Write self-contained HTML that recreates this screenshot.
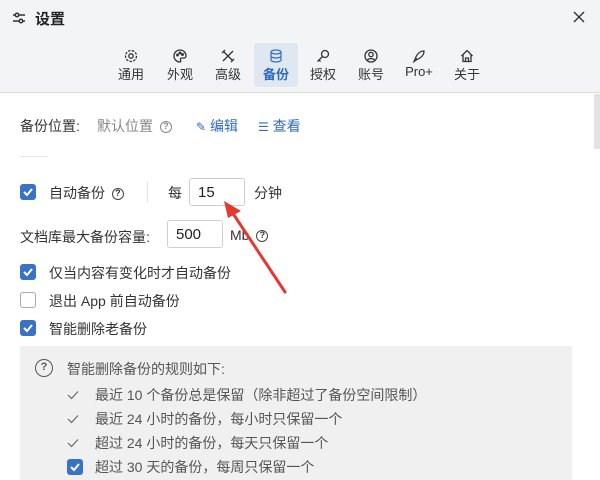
<!DOCTYPE html>
<html><head><meta charset="utf-8"><style>
*{margin:0;padding:0;box-sizing:border-box}
body{width:600px;height:480px;overflow:hidden;background:#fff;font-family:"Liberation Sans","Noto Sans CJK SC",sans-serif;color:#333;font-size:14px;position:relative}
.hdr{position:absolute;left:0;top:0;width:600px;height:93px;background:#f3f4f6;border-bottom:1px solid #dcdcdc}
.abs{position:absolute;white-space:nowrap}
.tab{position:absolute;top:43px;width:44px;height:44px;text-align:center;font-size:13px;color:#333}
.tab svg{display:block;margin:6px auto 0}
.tab span{display:block;margin-top:1px}
.cb{position:absolute;width:16px;height:16px;border-radius:3px;background:#3a73c4}
.cb svg{position:absolute;left:2px;top:2px}
.cbe{position:absolute;width:16px;height:16px;border-radius:3px;border:1px solid #aaa;background:#fff}
.inp{position:absolute;border:1px solid #cfcfcf;border-radius:3px;background:#fff;padding-left:8px;font-size:15px;color:#222}
.q{display:inline-block;width:12px;height:12px;border:1.4px solid #444;border-radius:50%;font-size:9px;line-height:9px;text-align:center;font-weight:bold;vertical-align:middle}
.g{color:#555}
.ck{position:absolute}
</style></head><body>
<div class="hdr"></div>
<svg class="abs" style="left:12px;top:12px" width="14" height="12" viewBox="0 0 14 12" fill="none" stroke="#333" stroke-width="1.5"><path d="M1 3h12M1 9h12"/><circle cx="5" cy="3" r="1.8" fill="#f3f4f6"/><circle cx="9" cy="9" r="1.8" fill="#f3f4f6"/></svg>
<div class="abs" style="left:35px;top:8px;font-size:15px;font-weight:bold;color:#222">设置</div>
<svg class="abs" style="left:573px;top:11px" width="12" height="12" viewBox="0 0 12 12" stroke="#333" stroke-width="1.4"><path d="M1 1l10 10M11 1L1 11"/></svg>

<div class="tab" style="left:109px"><svg width="14" height="14" viewBox="0 0 14 14" fill="none" stroke="#333" stroke-width="1.3"><circle cx="7" cy="7" r="2.2"/><circle cx="7" cy="7" r="5.5" stroke-dasharray="2.5 1.3"/></svg><span>通用</span></div>
<div class="tab" style="left:158px"><svg width="14" height="14" viewBox="0 0 14 14" fill="none" stroke="#333" stroke-width="1.3"><path d="M7 1a6 6 0 1 0 0 12c1 0 1-1 .5-2s0-2 1.5-2h2a2 2 0 0 0 2-2A6 6 0 0 0 7 1z"/><circle cx="4.5" cy="6" r=".8"/><circle cx="7" cy="4" r=".8"/><circle cx="9.5" cy="5.5" r=".8"/></svg><span>外观</span></div>
<div class="tab" style="left:206px"><svg width="14" height="14" viewBox="0 0 14 14" fill="none" stroke="#333" stroke-width="1.3"><path d="M2 2l10 10M12 2L2 12M1 4l3-3M10 13l3-3"/></svg><span>高级</span></div>
<div class="tab" style="left:254px;background:#dfe7f1;border-radius:3px;color:#2f6bbf;font-weight:bold"><svg width="14" height="14" viewBox="0 0 14 14" fill="none" stroke="#3a73c4" stroke-width="1.3"><ellipse cx="7" cy="3" rx="5" ry="2"/><path d="M2 3v8c0 1 2.2 2 5 2s5-1 5-2V3M2 7c0 1 2.2 2 5 2s5-1 5-2"/></svg><span>备份</span></div>
<div class="tab" style="left:301px"><svg width="14" height="14" viewBox="0 0 14 14" fill="none" stroke="#333" stroke-width="1.3"><circle cx="9" cy="5" r="3.5"/><path d="M6.5 7.5L1.5 12.5M3 11l1.5 1.5"/></svg><span>授权</span></div>
<div class="tab" style="left:349px"><svg width="14" height="14" viewBox="0 0 14 14" fill="none" stroke="#333" stroke-width="1.3"><circle cx="7" cy="7" r="6"/><circle cx="7" cy="5.5" r="2.2"/><path d="M3.5 11c1-1.8 6-1.8 7 0"/></svg><span>账号</span></div>
<div class="tab" style="left:397px"><svg width="14" height="14" viewBox="0 0 14 14" fill="none" stroke="#333" stroke-width="1.3"><path d="M12 2c-4 0-7 3-8.5 7l1.5 1.5C9 9 12 6 12 2zM3.5 9L2 12.5 5 10.5"/></svg><span>Pro+</span></div>
<div class="tab" style="left:445px"><svg width="14" height="14" viewBox="0 0 14 14" fill="none" stroke="#333" stroke-width="1.3"><path d="M1.5 7L7 1.5 12.5 7M3 5.5V12.5h8V5.5M5.5 12.5V9h3v3.5"/></svg><span>关于</span></div>

<div class="abs" style="left:594px;top:94px;width:6px;height:55px;background:#e3e3e3"></div>

<div class="abs" style="left:20px;top:116px">备份位置:</div>
<div class="abs g" style="left:97px;top:116px;color:#888">默认位置 <span class="q" style="border-color:#888;color:#888;margin-left:3px">?</span></div>
<div class="abs" style="left:196px;top:116px;color:#2f6bbf"><span style="font-size:12px">✎</span> 编辑</div>
<div class="abs" style="left:258px;top:116px;color:#2f6bbf"><span style="font-size:12px">☰</span> 查看</div>
<div class="abs" style="left:20px;top:156px;width:28px;height:1px;background:#e5e5e5"></div>

<div class="cb" style="left:20px;top:184px"><svg width="12" height="12" viewBox="0 0 12 12" fill="none" stroke="#fff" stroke-width="2"><path d="M2 6l3 3 5-6"/></svg></div>
<div class="abs" style="left:49px;top:183px">自动备份 <span class="q" style="margin-left:3px">?</span></div>
<div class="abs" style="left:147px;top:182px;width:1px;height:20px;background:#e5e5e5"></div>
<div class="abs" style="left:168px;top:183px">每</div>
<div class="inp" style="left:189px;top:178px;width:56px;height:28px;line-height:28px">15</div>
<div class="abs" style="left:254px;top:183px">分钟</div>

<div class="abs" style="left:20px;top:227px">文档库最大备份容量:</div>
<div class="inp" style="left:167px;top:220px;width:56px;height:28px;line-height:28px">500</div>
<div class="abs" style="left:230px;top:227px">Mb <span class="q" style="margin-left:3px">?</span></div>

<div class="cb" style="left:20px;top:264px"><svg width="12" height="12" viewBox="0 0 12 12" fill="none" stroke="#fff" stroke-width="2"><path d="M2 6l3 3 5-6"/></svg></div>
<div class="abs" style="left:49px;top:263px">仅当内容有变化时才自动备份</div>
<div class="cbe" style="left:20px;top:292px"></div>
<div class="abs" style="left:49px;top:291px">退出 App 前自动备份</div>
<div class="cb" style="left:20px;top:320px"><svg width="12" height="12" viewBox="0 0 12 12" fill="none" stroke="#fff" stroke-width="2"><path d="M2 6l3 3 5-6"/></svg></div>
<div class="abs" style="left:49px;top:319px">智能删除老备份</div>

<div class="abs" style="left:20px;top:346px;width:552px;height:134px;background:#f0f0f0"></div>
<div class="abs" style="left:35px;top:359px;width:18px;height:18px;border:1.5px solid #555;border-radius:50%;text-align:center;font-size:11px;line-height:15px;font-weight:bold;color:#555">?</div>
<div class="abs g" style="left:67px;top:359px">智能删除备份的规则如下:</div>
<svg class="ck" style="left:67px;top:390px" width="12" height="10" viewBox="0 0 12 10" fill="none" stroke="#666" stroke-width="1.2"><path d="M1 5l3.5 3.5L11 1.5"/></svg><div class="abs g" style="left:95px;top:385px">最近 10 个备份总是保留（除非超过了备份空间限制）</div>
<svg class="ck" style="left:67px;top:414px" width="12" height="10" viewBox="0 0 12 10" fill="none" stroke="#666" stroke-width="1.2"><path d="M1 5l3.5 3.5L11 1.5"/></svg><div class="abs g" style="left:95px;top:409px">最近 24 小时的备份，每小时只保留一个</div>
<svg class="ck" style="left:67px;top:438px" width="12" height="10" viewBox="0 0 12 10" fill="none" stroke="#666" stroke-width="1.2"><path d="M1 5l3.5 3.5L11 1.5"/></svg><div class="abs g" style="left:95px;top:433px">超过 24 小时的备份，每天只保留一个</div>
<div class="cb" style="left:67px;top:459px"><svg width="12" height="12" viewBox="0 0 12 12" fill="none" stroke="#fff" stroke-width="2"><path d="M2 6l3 3 5-6"/></svg></div>
<div class="abs g" style="left:95px;top:457px">超过 30 天的备份，每周只保留一个</div>

<svg class="abs" style="left:0;top:0" width="600" height="480"><path d="M285 292L232 212" stroke="#e53930" stroke-width="3" stroke-linecap="round"/><path d="M224 201L241 211L228 218Z" fill="#e53930"/></svg>
</body></html>
